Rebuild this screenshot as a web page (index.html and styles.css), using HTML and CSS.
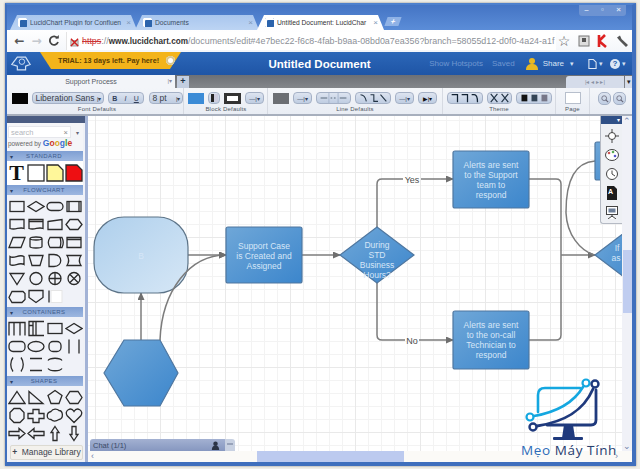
FILE: index.html
```html
<!DOCTYPE html>
<html lang="en">
<head>
<meta charset="utf-8">
<title>Untitled Document: LucidChart</title>
<link rel="stylesheet" href="styles.css">
</head>
<body>
<div class="window">
  <!-- browser tab strip -->
  <div class="tabstrip">
    <div class="tab"><span class="favicon"></span><span class="tab-title">LucidChart Plugin for Confluen</span><span class="tab-x">×</span></div>
    <div class="tab"><span class="favicon"></span><span class="tab-title">Documents</span><span class="tab-x">×</span></div>
    <div class="tab tab-active"><span class="favicon"></span><span class="tab-title">Untitled Document: LucidChar</span><span class="tab-x">×</span></div>
    <div class="tab-new">+</div>
    <div class="winctl"><span>–</span><span>▫</span><span>×</span></div>
  </div>

  <!-- address bar -->
  <div class="urlbar">
    <span class="nav nav-on">←</span><span class="nav nav-off">→</span>
    <svg class="nav-reload" viewBox="0 0 12 12"><path d="M9.5 3.2A4.2 4.2 0 1 0 10 7" fill="none" stroke="#444" stroke-width="1.8"/><path d="M7.2 3.6h3.6V0z" fill="#444"/></svg>
    <div class="omnibox">
      <svg class="lock" viewBox="0 0 10 12"><rect x="1" y="5" width="8" height="6" fill="#d8d4c8" stroke="#999"/><path d="M1 3l8 8M9 3l-8 8" stroke="#c22" stroke-width="1.6"/></svg>
      <span class="scheme">https</span><span class="url-rest">://</span><span class="host">www.lucidchart.com</span><span class="url-rest">/documents/edit#4e7bec22-f6c8-4fab-b9aa-08bd0a7ea356?branch=58055d12-d0f0-4a24-a1f</span>
    </div>
    <span class="star">☆</span>
    <svg class="ext" viewBox="0 0 14 14"><rect x="2" y="2" width="10" height="10" fill="#ddd" stroke="#777"/><rect x="5" y="4" width="4" height="4" fill="#555"/></svg>
    <svg class="ext" viewBox="0 0 14 14"><path d="M3 1v12M3 7l6-6M3 7l7 6" stroke="#d22" stroke-width="2.6" fill="none"/></svg>
    <svg class="ext" viewBox="0 0 14 14"><path d="M2 3.5l3-2 1.5 3.5 6.5 6-2 2-6.5-6.5z" fill="#555"/></svg>
  </div>

  <!-- application header -->
  <div class="appbar">
    <svg class="applogo" viewBox="0 0 24 18"><path d="M2 10L8 2h9l5 8-5 2v4H8v-4z" fill="none" stroke="#cfe0f5" stroke-width="1.3"/><circle cx="13" cy="7" r="3" fill="none" stroke="#cfe0f5"/></svg>
    <div class="trial"><span>TRIAL: 13 days left. Pay here!</span><i class="trial-x"></i></div>
    <div class="doc-title">Untitled Document</div>
    <div class="app-actions">
      <span class="dim hot">Show Hotspots</span>
      <span class="dim saved">Saved</span>
      <svg class="share-ico" viewBox="0 0 14 14"><circle cx="7" cy="4" r="3" fill="#e8b923"/><path d="M1 13c0-5 3-6 6-6s6 1 6 6z" fill="#e8b923"/></svg>
      <span class="share">Share</span><span class="caret">▾</span>
      <svg class="hdr-ico" viewBox="0 0 10 12"><path d="M1 1h5l3 3v7H1z" fill="none" stroke="#dfe8f5" stroke-width="1.2"/></svg><span class="caret">▾</span>
      <span class="help">?</span><span class="caret">▾</span>
    </div>
  </div>

  <!-- document page tabs -->
  <div class="pagetabs">
    <div class="pagetab"><span>Support Process</span><em>|▾</em></div>
    <div class="pagetab-add">+</div>
    <div class="pager"><span>|◂ ◂ ▸ ▸|</span></div>
    <div class="pager-menu">▾</div>
  </div>

  <!-- formatting toolbar -->
  <div class="toolbar">
    <div class="tgroup g-font">
      <div class="trow">
        <span class="swatch sw-black"></span>
        <span class="btn sel sel-font">Liberation Sans<b>|▾</b></span>
        <span class="btn seg-bold"><strong>B</strong><i>I</i><u>U</u></span>
        <span class="btn sel sel-size">8 pt<b>|▾</b></span>
      </div>
      <label>Font Defaults</label>
    </div>
    <div class="tgroup g-block">
      <div class="trow">
        <span class="swatch sw-blue"></span>
        <span class="btn sq"><span class="half"></span></span>
        <span class="swatch sw-border"></span>
        <span class="btn lsel">—|▾</span>
      </div>
      <label>Block Defaults</label>
    </div>
    <div class="tgroup g-line">
      <div class="trow">
        <span class="swatch sw-grey"></span>
        <span class="btn lsel">—|▾</span>
        <span class="btn seg w35"><svg viewBox="0 0 35 12"><path d="M2 6h8M14 6h2M18 6h2M25 6h8" stroke="#456" fill="none"/><path d="M12 0v12M23 0v12" stroke="#9fb0c8"/></svg></span>
        <span class="btn seg w36"><svg viewBox="0 0 36 12"><path d="M3 2c4 0 6 3 7 8M15 2h4v8h5M27 2l7 8" stroke="#234" stroke-width="1.3" fill="none"/></svg></span>
        <span class="btn lsel">—|▾</span>
        <span class="btn lsel arrowsel">▶|▾</span>
      </div>
      <label>Line Defaults</label>
    </div>
    <div class="tgroup g-theme">
      <div class="trow">
        <span class="btn seg w36"><svg viewBox="0 0 36 12"><path d="M2 2h7v9M14 2h7v9M26 2h3c3 0 4 4 4 9" stroke="#123" stroke-width="1.5" fill="none"/></svg></span>
        <span class="btn seg w25"><svg viewBox="0 0 25 12"><path d="M2 1l8 10M10 1L2 11M15 1l8 10M23 1l-8 10" stroke="#234" stroke-width="1.4"/></svg></span>
        <span class="btn seg w36"><svg viewBox="0 0 36 12"><rect x="3" y="2" width="7" height="8" fill="#111"/><rect x="15" y="2" width="7" height="8" fill="#345"/><rect x="27" y="2" width="7" height="8" fill="#778"/></svg></span>
      </div>
      <label>Theme</label>
    </div>
    <div class="tgroup g-page">
      <div class="trow"><span class="swatch sw-page"></span></div>
      <label>Page</label>
    </div>
    <div class="tzoom">
      <span class="btn zoombtn"><svg viewBox="0 0 10 10"><circle cx="4" cy="4" r="3" fill="none" stroke="#667"/><path d="M6 6l3 3" stroke="#667" stroke-width="1.4"/></svg></span>
      <span class="btn zoombtn"><svg viewBox="0 0 10 10"><circle cx="4" cy="4" r="3" fill="none" stroke="#667"/><path d="M6 6l3 3" stroke="#667" stroke-width="1.4"/></svg></span>
    </div>
  </div>

  <div class="main">
    <!-- shape library -->
    <aside class="library">
      <div class="lib-top"></div>
      <div class="lib-search">
        <div class="search-row">
          <div class="search-line"><span>search</span><em>×</em></div>
          <span class="search-caret">▾</span>
        </div>
        <div class="powered">powered by <b class="g1">G</b><b class="g2">o</b><b class="g3">o</b><b class="g1">g</b><b class="g4">l</b><b class="g2">e</b></div>
      </div>
      <div class="lib-head">▾<span>STANDARD</span></div>
      <div class="shapes standard">
        <span class="big-t">T</span>
        <svg viewBox="0 0 18 18"><rect x="1" y="1" width="16" height="16" class="s"/></svg>
        <svg viewBox="0 0 18 18"><path d="M1 1h11l5 5v11H1z" class="s note-y"/></svg>
        <svg viewBox="0 0 18 18"><path d="M1 1h11l5 5v11H1z" class="s note-r"/></svg>
      </div>
      <div class="lib-head">▾<span>FLOWCHART</span></div>
      <div class="shapes">
        <svg viewBox="0 0 18 14"><rect x="2" y="2" width="14" height="10" class="s"/></svg>
        <svg viewBox="0 0 18 14"><path d="M1 7l8-5 8 5-8 5z" class="s"/></svg>
        <svg viewBox="0 0 18 14"><rect x="1" y="3" width="16" height="8" rx="4" class="s"/></svg>
        <svg viewBox="0 0 18 14"><rect x="2" y="2" width="14" height="10" class="s"/><path d="M4 2v10M14 2v10" class="s"/></svg>
        <svg viewBox="0 0 18 14"><path d="M2 2h14v9c-5-2-8 2-14 0z" class="s"/></svg>
        <svg viewBox="0 0 18 14"><path d="M2 2h14v9c-5-2-8 2-14 0zM2 4h14" class="s"/></svg>
        <svg viewBox="0 0 18 14"><path d="M2 4l14-2v10H2z" class="s"/></svg>
        <svg viewBox="0 0 18 14"><path d="M5 2h8l4 5-4 5H5L1 7z" class="s"/></svg>
        <svg viewBox="0 0 18 14"><path d="M5 2h12l-4 10H1z" class="s"/></svg>
        <svg viewBox="0 0 18 14"><path d="M3 3c0-2 12-2 12 0v8c0 2-12 2-12 0zM3 3c0 2 12 2 12 0" class="s"/></svg>
        <svg viewBox="0 0 18 14"><path d="M4 2h12c1.500 3 1.500 7 0 10H4c-2-3-2-7 0-10zM14 2c1 3 1 7 0 10" class="s"/></svg>
        <svg viewBox="0 0 18 14"><path d="M2 2h14v10H2zM2 4h14" class="s"/></svg>
        <svg viewBox="0 0 18 14"><path d="M2 3c4 3 9-3 14 0v8c-5-3-10 3-14 0z" class="s"/></svg>
        <svg viewBox="0 0 18 14"><path d="M2 2h14l-3 10H5z" class="s"/></svg>
        <svg viewBox="0 0 18 14"><path d="M3 1h5c9 0 9 12 0 12H3z" class="s"/></svg>
        <svg viewBox="0 0 18 14"><path d="M2 2h14c-2 3-2 7 0 10H2c2-3 2-7 0-10z" class="s"/></svg>
        <svg viewBox="0 0 18 14"><path d="M2 2h14l-7 11z" class="s"/></svg>
        <svg viewBox="0 0 18 14"><circle cx="9" cy="7" r="6" class="s"/></svg>
        <svg viewBox="0 0 18 14"><circle cx="9" cy="7" r="6" class="s"/><path d="M3 7h12M9 1v12" class="s"/></svg>
        <svg viewBox="0 0 18 14"><circle cx="9" cy="7" r="6" class="s"/><path d="M5 3l8 8M13 3l-8 8" class="s"/></svg>
        <svg viewBox="0 0 18 14"><path d="M4 2h11l2 2v6l-3 3H4L1 8z" class="s"/></svg>
        <svg viewBox="0 0 18 14"><path d="M2 1h14v7l-7 5-7-5z" class="s"/></svg>
        <svg viewBox="0 0 18 14"><path d="M3 1v12" class="s"/><rect x="5" y="1" width="11" height="12" class="s-faint"/></svg>
      </div>
      <div class="lib-head">▾<span>CONTAINERS</span></div>
      <div class="shapes pad5">
        <svg viewBox="0 0 18 16"><path d="M1 15V2h16v13M6 2v13M12 2v13" class="s"/></svg>
        <svg viewBox="0 0 18 16"><path d="M17 1H2v14h15M2 5h4M6 1v14M9 1v14" class="s"/></svg>
        <svg viewBox="0 0 18 16"><rect x="2" y="3" width="14" height="10" class="s"/></svg>
        <svg viewBox="0 0 18 16"><path d="M1 8l8-5 8 5-8 5z" class="s"/></svg>
        <svg viewBox="0 0 18 16"><rect x="1" y="3" width="16" height="10" rx="4" class="s"/></svg>
        <svg viewBox="0 0 18 16"><ellipse cx="9" cy="8" rx="8" ry="5" class="s"/></svg>
        <svg viewBox="0 0 18 16"><rect x="3" y="3" width="12" height="10" rx="4" class="s"/></svg>
        <svg viewBox="0 0 18 16"><path d="M4 1v14M14 1v14" class="s"/></svg>
        <svg viewBox="0 0 18 16"><path d="M5 1C2 5 2 11 5 15M13 1c3 4 3 10 0 14" class="s"/></svg>
        <svg viewBox="0 0 18 16"><path d="M3 2h12M3 14h12" class="s"/></svg>
        <svg viewBox="0 0 18 16"><path d="M2 4c2-3 12-3 14 0M2 12c2 3 12 3 14 0" class="s"/></svg>
      </div>
      <div class="lib-head">▾<span>SHAPES</span></div>
      <div class="shapes">
        <svg viewBox="0 0 18 16"><path d="M9 2l8 12H1z" class="s"/></svg>
        <svg viewBox="0 0 18 16"><path d="M2 2l14 12H2z" class="s"/></svg>
        <svg viewBox="0 0 18 16"><path d="M9 1l7 5-3 8H5L2 6z" class="s"/></svg>
        <svg viewBox="0 0 18 16"><path d="M5 2h8l4 6-4 6H5L1 8z" class="s"/></svg>
        <svg viewBox="0 0 18 16"><path d="M6 1h6l4 4v6l-4 4H6l-4-4V5z" class="s"/></svg>
        <svg viewBox="0 0 18 16"><path d="M6 2h6v4h5v5h-5v4H6v-4H1V6h5z" class="s"/></svg>
        <svg viewBox="0 0 18 16"><path d="M5 4c2-3 6-3 8-1 4 0 5 8 0 9-3 2-6 2-8 0-5 0-5-7 0-8z" class="s"/></svg>
        <svg viewBox="0 0 18 16"><path d="M9 15L2 8C-1 3 6-1 9 4c3-5 10-1 7 4z" class="s"/></svg>
        <svg viewBox="0 0 18 16"><path d="M1 6h10V3l6 5-6 5v-3H1z" class="s"/></svg>
        <svg viewBox="0 0 18 16"><path d="M17 6H7V3L1 8l6 5v-3h10z" class="s"/></svg>
        <svg viewBox="0 0 18 16"><path d="M9 1l4 6h-2v8H7V7H5z" class="s"/></svg>
        <svg viewBox="0 0 18 16"><path d="M9 15l4-6h-2V1H7v8H5z" class="s"/></svg>
      </div>
      <button class="manage"><b>+</b> Manage Library</button>
    </aside>

    <div class="workspace">
      <div class="workspace-top">
        <!-- drawing canvas -->
        <section class="canvas">
          <svg class="diagram" viewBox="88 116 534 335">
            <defs>
              <linearGradient id="fillLight" x1="0" y1="0" x2="1" y2="1"><stop offset="0" stop-color="#aecfec"/><stop offset="1" stop-color="#d6e7f6"/></linearGradient>
              <linearGradient id="fillBlue" x1="0" y1="0" x2="1" y2="1"><stop offset="0" stop-color="#6fa7d8"/><stop offset="1" stop-color="#3c86cc"/></linearGradient>
              <marker id="head" markerWidth="8" markerHeight="7" refX="7" refY="3.500" orient="auto" markerUnits="userSpaceOnUse"><path d="M0 0l8 3.500-8 3.500z" fill="#6f6f6f"/></marker>
            </defs>

            <g class="link">
              <path d="M188 255H226" marker-end="url(#head)"/>
              <path d="M141 340V293" marker-end="url(#head)"/>
              <path d="M302 255H340" marker-end="url(#head)"/>
              <path d="M377 227V184q0-5 5-5H403M421 179H453" marker-end="url(#head)"/>
              <path d="M377 283V335q0 5 5 5H405M419 340H453" marker-end="url(#head)"/>
              <path d="M529 179H556q5 0 5 5V335q0 5-5 5H529"/>
              <path d="M561 255H595" marker-end="url(#head)"/>
              <path d="M595 161C565 163 566 205 566 213C567 235 580 250 594 255"/>
            </g>

            <rect class="node light" x="94" y="217" width="94" height="76" rx="30"/>
            <text class="nlabel" x="141" y="259">B</text>

            <path class="node" d="M124 340H160L178 373L160 406H124L104 373Z"/>

            <!-- this connector runs over the rounded block -->
            <g class="link">
              <path d="M160 340C162 290 190 255 226 255" marker-end="url(#head)"/>
            </g>

            <rect class="node" x="226" y="227" width="76" height="56" rx="2"/>
            <text class="nlabel" x="264" y="249">Support Case</text>
            <text class="nlabel" x="264" y="259">is Created and</text>
            <text class="nlabel" x="264" y="269">Assigned</text>

            <path class="node" d="M377 227L414 255L377 283L340 255Z"/>
            <text class="nlabel" x="377" y="248">During</text>
            <text class="nlabel" x="377" y="258">STD</text>
            <text class="nlabel" x="377" y="268">Business</text>
            <text class="nlabel" x="377" y="278">Hours?</text>

            <text class="elabel" x="412" y="183">Yes</text>
            <text class="elabel" x="412" y="344">No</text>

            <rect class="node" x="453" y="151" width="76" height="57" rx="2"/>
            <text class="nlabel" x="491" y="168">Alerts are sent</text>
            <text class="nlabel" x="491" y="178">to the Support</text>
            <text class="nlabel" x="491" y="188">team to</text>
            <text class="nlabel" x="491" y="198">respond</text>

            <rect class="node" x="453" y="311" width="76" height="58" rx="2"/>
            <text class="nlabel" x="491" y="328">Alerts are sent</text>
            <text class="nlabel" x="491" y="338">to the on-call</text>
            <text class="nlabel" x="491" y="348">Technician to</text>
            <text class="nlabel" x="491" y="358">respond</text>

            <rect class="node" x="595" y="142" width="40" height="38" rx="2"/>
            <path class="node" d="M595 255L640 221V289Z"/>
            <text class="nlabel" x="617" y="251">If</text>
            <text class="nlabel" x="616" y="261">as</text>
          </svg>

          <!-- floating tool palette -->
          <div class="palette">
            <div class="palette-head">▾</div>
            <svg viewBox="0 0 14 14"><circle cx="7" cy="7" r="3.500" class="p"/><path d="M7 0v4M7 10v4M0 7h4M10 7h4" class="p"/></svg>
            <svg viewBox="0 0 14 14"><ellipse cx="7" cy="7" rx="6.500" ry="5.500" class="p"/><circle cx="4" cy="5" r="1.300" fill="#c55"/><circle cx="8" cy="4" r="1.300" fill="#5a5"/><circle cx="10" cy="8" r="1.300" fill="#55c"/></svg>
            <svg viewBox="0 0 14 14"><circle cx="7" cy="7" r="5.500" class="p"/><path d="M7 3.500V7l3 2" class="p"/></svg>
            <svg viewBox="0 0 14 14"><path d="M2 0h7l3 3v11H2z" fill="#1c1c1c"/><text x="3" y="8" class="p-a">A</text></svg>
            <svg viewBox="0 0 14 14"><rect x="1.500" y="1.500" width="11" height="8" class="p"/><rect x="3.500" y="3.500" width="7" height="4" fill="#6d7f99"/><path d="M7 10v2M3 14l4-3 4 3" class="p"/></svg>
          </div>

          <div class="chat">
            <div class="chat-bar">
              <span>Chat (1/1)</span>
              <svg viewBox="0 0 10 10"><circle cx="5" cy="3" r="2.500" fill="#2b3446"/><path d="M1 10c0-4 2-5 4-5s4 1 4 5z" fill="#2b3446"/></svg>
            </div>
            <div class="chat-end"><i></i></div>
          </div>
        </section>

        <div class="vscroll"><span class="arrow">⌃</span><span class="thumb"></span><span class="arrow">⌄</span></div>
      </div>
      <div class="hscroll"><span class="arrow">‹</span><span class="hthumb"></span><span class="arrow">›</span></div>
    </div>
  </div>
</div>

<!-- site mark in the corner -->
<div class="mark">
  <svg viewBox="0 0 80 66">
    <g fill="none" stroke-linecap="round">
      <path d="M17 37V20q0-7 7-7H59" stroke="#14a7e0" stroke-width="2.600"/>
      <path d="M13 41C36 37 53 27 62 12" stroke="#14a7e0" stroke-width="2.600"/>
      <circle cx="9" cy="42" r="3.500" stroke="#14a7e0" stroke-width="2.200" fill="#fff"/>
      <circle cx="65" cy="8" r="3.500" stroke="#14a7e0" stroke-width="2.200" fill="#fff"/>
      <path d="M16 51C42 47 62 37 72 14" stroke="#1f3a7d" stroke-width="2.800"/>
      <path d="M75 15V45q0 5-5 5H26" stroke="#1f3a7d" stroke-width="2.800"/>
      <circle cx="12" cy="52" r="3.500" stroke="#1f3a7d" stroke-width="2.400" fill="#fff"/>
      <circle cx="74" cy="9" r="3.500" stroke="#1f3a7d" stroke-width="2.400" fill="#fff"/>
    </g>
    <path d="M43 50h9l2 13H41z" fill="#1f3a7d"/>
    <rect x="32" y="62" width="30" height="3" rx="1" fill="#1f3a7d"/>
  </svg>
  <span><b>Mẹo</b> Máy Tính</span>
</div>
</body>
</html>
```

FILE: styles.css
```css
* { box-sizing: border-box; }
html, body { margin: 0; height: 100%; }
body {
  position: relative;
  width: 640px;
  height: 469px;
  overflow: hidden;
  background: #efeee8;
  font-family: "Liberation Sans", Arial, sans-serif;
  padding: 3px 5px 0;
}

.window {
  width: 631px;
  height: 463px;
  border: solid #3f6fbd;
  border-width: 2px 4px 4px 2px;
  border-top-color: #4d80cd;
  box-shadow: 0 0 2px #888;
  display: flex;
  flex-direction: column;
  overflow: hidden;
  background: #fff;
}

/* browser chrome */
.tabstrip {
  height: 25px;
  flex: none;
  display: flex;
  align-items: flex-end;
  padding-left: 3px;
  background: linear-gradient(#4474c4, #5b8dd8);
  position: relative;
}
.tab {
  width: 124px;
  height: 15px;
  flex: none;
  margin-right: -2px;
  padding: 0 6px 0 8px;
  display: flex;
  align-items: center;
  gap: 3px;
  font-size: 6.700px;
  color: #3d4d63;
  background: linear-gradient(#a9c6ee, #bcd4f3);
  clip-path: polygon(0 100%, 7px 0, calc(100% - 6px) 0, 100% 100%);
}
.tab:first-child { width: 127px; }
.tab-active { background: #fff; color: #333; width: 127px; }
.favicon {
  width: 9px;
  height: 9px;
  flex: none;
  border-radius: 1px;
  background: #2c64ac;
  box-shadow: inset 2px 2px 0 #fff, inset -2px 0 0 #2c64ac;
}
.tab-title { flex: 1; white-space: nowrap; overflow: hidden; }
.tab-x { color: #8097b7; font-size: 8px; }
.tab-new {
  width: 14px;
  height: 9px;
  margin: 0 0 4px 4px;
  text-align: center;
  font: bold 8px/9px "Liberation Sans", sans-serif;
  color: #fff;
  background: #8fb2e6;
  transform: skewX(-20deg);
}
.winctl {
  position: absolute;
  top: 0;
  right: 6px;
  display: flex;
  gap: 1px;
  height: 11px;
  background: #6d93d2;
  border-radius: 0 0 3px 3px;
}
.winctl span {
  width: 15px;
  font: bold 8px/10px "Liberation Sans", sans-serif;
  text-align: center;
  color: #d8e4f6;
}

.urlbar {
  height: 22px;
  flex: none;
  display: flex;
  align-items: center;
  padding: 0 3px 0 4px;
  background: linear-gradient(#fff, #f4f6fa);
}
.nav { width: 17px; text-align: center; font: bold 12px/1 "DejaVu Sans", sans-serif; }
.nav-on { color: #555; }
.nav-off { color: #c4c8ce; }
.nav-reload { width: 12px; height: 12px; margin: 0 4px 0 3px; }
.omnibox {
  flex: 1;
  min-width: 0;
  height: 18px;
  margin-left: 2px;
  padding-left: 3px;
  display: flex;
  align-items: center;
  overflow: hidden;
  white-space: nowrap;
  font-size: 8.900px;
  color: #8c9097;
  background: #fff;
  border-left: 1px solid #e4e4e4;
}
.lock { width: 9px; height: 11px; margin-right: 3px; flex: none; }
.scheme { color: #c33; text-decoration: line-through; }
.host { color: #333; font-weight: bold; font-size: 8.200px; }
.star { width: 16px; font: 14px/1 "DejaVu Sans", sans-serif; color: #555; text-align: center; flex: none; }
.ext { width: 14px; height: 14px; margin-left: 5px; flex: none; }

/* application header */
.appbar {
  height: 23px;
  flex: none;
  position: relative;
  display: flex;
  align-items: center;
  padding-left: 3px;
  background: linear-gradient(#2c67b8, #1f55a6);
  color: #fff;
}
.applogo { width: 22px; height: 17px; flex: none; }
.trial {
  position: absolute;
  left: 33px;
  top: 0;
  width: 141px;
  height: 17px;
  padding: 0 18px 0 18px;
  display: flex;
  align-items: center;
  white-space: nowrap;
  font-size: 7.200px;
  font-weight: bold;
  color: #5a3d05;
  background: #f3b41b;
  clip-path: polygon(0 0, 100% 0, calc(100% - 11px) 100%, 11px 100%);
}
.trial-x {
  position: absolute;
  left: 126px;
  top: 4px;
  width: 9px;
  height: 9px;
  border-radius: 50%;
  background: #fff;
  box-shadow: inset 0 0 0 2px #d8c690;
}
.doc-title {
  position: absolute;
  left: 0;
  right: 0;
  text-align: center;
  font-size: 11.500px;
  font-weight: bold;
}
.app-actions {
  margin-left: auto;
  position: relative;
  display: flex;
  align-items: center;
  padding-right: 6px;
  font-size: 8px;
}
.dim { color: #6f96cf; }
.hot { margin-right: 9px; }
.saved { margin-right: 10px; }
.share-ico { width: 14px; height: 14px; margin-right: 4px; }
.share { color: #d9e4f4; }
.caret { color: #d5e1f3; font-size: 7px; margin: 0 12px 0 6px; }
.hdr-ico { width: 9px; height: 12px; margin-left: 2px; }
.help {
  width: 10px;
  height: 10px;
  border-radius: 50%;
  background: #dce6f4;
  color: #2159aa;
  font: bold 8px/10px "Liberation Sans", sans-serif;
  text-align: center;
}
.app-actions .caret:last-child { margin: 0 0 0 2px; }
.app-actions .hdr-ico + .caret { margin: 0 7px 0 2px; }

/* page tabs */
.pagetabs {
  height: 13px;
  flex: none;
  display: flex;
  align-items: stretch;
  background: linear-gradient(#6d7076, #83868b);
}
.pagetab {
  width: 168px;
  position: relative;
  text-align: center;
  font-size: 7px;
  line-height: 13px;
  color: #555b66;
  background: #f3f5f9;
}
.pagetab em { position: absolute; right: 3px; font-style: normal; color: #889; font-size: 6px; }
.pagetab-add {
  width: 12px;
  margin: 1px 0 0 2px;
  text-align: center;
  font: bold 9px/11px "Liberation Sans", sans-serif;
  color: #234;
  background: #c3cee0;
}
.pager {
  margin: 1px 0 0 auto;
  width: 58px;
  text-align: center;
  font-size: 6px;
  line-height: 12px;
  color: #8891a3;
  background: #d5dcea;
  border-radius: 3px 0 0 0;
}
.pager-menu {
  width: 7px;
  margin: 1px 0 0 1px;
  font-size: 7px;
  line-height: 12px;
  text-align: center;
  color: #222;
  background: #d5dcea;
}

/* formatting toolbar */
.toolbar {
  height: 28px;
  flex: none;
  display: flex;
  padding-left: 4px;
  background: linear-gradient(#f3f5f9, #e9edf4);
  border-bottom: 2px solid #a7afbd;
  color: #4b5360;
}
.tgroup {
  display: flex;
  flex-direction: column;
  align-items: center;
  padding-top: 4px;
  border-right: 1px solid #d6dae2;
  flex: none;
}
.tgroup label { margin-top: 1px; font-size: 6px; line-height: 9px; color: #4f5662; letter-spacing: .2px; }
.trow { display: flex; align-items: center; gap: 4px; height: 13px; }
.g-font { width: 173px; }
.g-block { width: 84px; padding-left: 1px; }
.g-line { width: 175px; }
.g-theme { width: 113px; }
.g-page { width: 34px; }
.swatch { display: block; width: 16px; height: 11px; flex: none; }
.sw-black { background: #050505; }
.sw-blue { background: #3b8bd6; }
.sw-border { width: 17px; background: #fff; border: 3px solid #333; }
.sw-grey { background: #6b6e73; }
.sw-page { background: #fff; border: 1px solid #b7bfcc; height: 12px; }
.btn {
  display: flex;
  align-items: center;
  justify-content: center;
  height: 12px;
  flex: none;
  border: 1px solid #a5b1c6;
  border-radius: 4px;
  background: linear-gradient(#dde4f0, #bfcde2);
  color: #33405a;
  font-size: 7px;
}
.btn svg { width: 100%; height: 100%; display: block; }
.sel { justify-content: space-between; padding: 0 1px 0 3px; }
.sel b { font-weight: normal; font-size: 6px; }
.sel-font { width: 72px; font-size: 8.500px; color: #3a3f49; }
.sel-size { width: 34px; font-size: 8.500px; color: #3a3f49; margin-left: 1px; }
.seg-bold { width: 36px; justify-content: space-around; font-size: 7px; }
.sq { width: 12px; }
.half { width: 7px; height: 8px; background: linear-gradient(90deg, #222 50%, #ccd 50%); }
.lsel { width: 19px; font-size: 6px; }
.arrowsel { color: #111; }
.seg { padding: 0; }
.w25 { width: 25px; }
.w35 { width: 35px; }
.w36 { width: 36px; }
.tzoom { display: flex; gap: 2px; padding: 4px 0 0 8px; }
.zoombtn { width: 13px; height: 13px; border-radius: 5px; padding: 1.500px; }

/* main work area */
.main {
  flex: 1;
  min-height: 0;
  display: flex;
}
.library {
  width: 81px;
  flex: none;
  display: flex;
  flex-direction: column;
  background: #eff1f7;
  border-right: 3px solid #a3b3d6;
  overflow: hidden;
  padding-right: 2px;
}
.lib-top { height: 7px; margin-right: -2px; flex: none; background: #4a5c82; }
.lib-search { height: 28px; flex: none; padding: 3px 1px 0; background: #f4f5f8; }
.search-row { display: flex; align-items: center; gap: 2px; }
.search-line {
  flex: 1;
  display: flex;
  justify-content: space-between;
  height: 12px;
  font-size: 7.500px;
  line-height: 11px;
  color: #b3b6bc;
  padding: 0 2px 0 2px;
  background: #fff;
  border: 1px solid #e6e7ec;
}
.search-line em { font-style: normal; color: #888; }
.search-caret { width: 9px; font-size: 6px; text-align: center; color: #667; }
.powered { font-size: 6.400px; line-height: 11px; color: #666; white-space: nowrap; }
.powered b { font-size: 8.500px; }
.g1 { color: #3a6fd0; }
.g2 { color: #cd3a2b; }
.g3 { color: #d9a825; }
.g4 { color: #3a9a45; }
.lib-head {
  height: 10px;
  flex: none;
  display: flex;
  align-items: center;
  padding-left: 3px;
  font-size: 6px;
  color: #2d4164;
  background: linear-gradient(#7f9fd3, #9db7e0);
}
.lib-head span { flex: 1; text-align: center; color: #3f5c8d; letter-spacing: .4px; padding-right: 8px; }
.shapes {
  flex: none;
  display: grid;
  grid-template-columns: repeat(4, 19px);
  grid-auto-rows: 18px;
  padding: 2px 0;
  justify-items: center;
  align-items: center;
  background: #f0f2f8;
}
.pad5 { padding-bottom: 3px; }
.shapes svg { width: 18px; height: 17px; display: block; }
.standard { grid-auto-rows: 21px; background: #fff; padding: 1px 0 2px; }
.standard svg { height: 18px; }
.big-t { font: bold 22px/20px "Liberation Serif", serif; color: #111; }
.s { fill: none; stroke: #2b2b2b; stroke-width: 1.300; }
.s-faint { fill: #fff; stroke: #e5e5e5; }
.note-y { fill: #fff79a; }
.note-r { fill: #ee0f12; }
.manage {
  margin: auto 0 2px 3px;
  width: 73px;
  height: 15px;
  flex: none;
  padding: 0;
  font: 8.500px/13px "Liberation Sans", sans-serif;
  color: #3e4550;
  background: #f3f1ec;
  border: 1px solid #dcdad2;
  border-radius: 2px;
}
.manage b { margin-right: 2px; }

.workspace {
  flex: 1;
  min-width: 0;
  display: flex;
  flex-direction: column;
}
.workspace-top {
  flex: 1;
  min-height: 0;
  display: flex;
}

/* drawing canvas with its grid */
.canvas {
  flex: 1;
  min-width: 0;
  position: relative;
  overflow: hidden;
  background-color: #fff;
  background-image:
    linear-gradient(90deg, #e9e9e9 1px, transparent 1px),
    linear-gradient(#e9e9e9 1px, transparent 1px),
    linear-gradient(90deg, #f3f3f3 1px, transparent 1px),
    linear-gradient(#f3f3f3 1px, transparent 1px);
  background-size: 65px 65px, 65px 65px, 13px 13px, 13px 13px;
  background-position: 7px 56px, 7px 56px, 7px 4px, 7px 4px;
}
.diagram { position: absolute; left: 0; top: 0; width: 534px; height: 335px; }
.link path { fill: none; stroke: #7c7c7c; stroke-width: 1.500; }
.node { fill: url(#fillBlue); stroke: #4f77a0; stroke-width: 1.200; }
.light { fill: url(#fillLight); stroke: #5d7488; }
.nlabel {
  fill: #d6e6f7;
  font-size: 8.500px;
  text-anchor: middle;
}
.elabel {
  fill: #4d4d4d;
  font-size: 9px;
  text-anchor: middle;
}

.palette {
  position: absolute;
  right: 0;
  top: 0;
  width: 22px;
  height: 108px;
  display: flex;
  flex-direction: column;
  align-items: center;
  gap: 5px;
  background: #eef0f4;
  border: 1px solid #b5bac4;
  border-right: 0;
  border-top: 0;
  border-radius: 0 0 0 3px;
}
.palette-head {
  width: 100%;
  height: 8px;
  text-align: right;
  font-size: 6px;
  line-height: 8px;
  padding-right: 2px;
  color: #fff;
  background: #2f4f86;
}
.palette svg { width: 14px; height: 14px; display: block; }
.p { fill: #fff; stroke: #444; stroke-width: 1; }
.p-a { fill: #fff; font-size: 7px; font-weight: bold; }

.chat {
  position: absolute;
  left: 2px;
  bottom: 0;
  height: 12px;
  display: flex;
}
.chat-bar {
  width: 135px;
  display: flex;
  align-items: center;
  justify-content: space-between;
  padding: 0 5px 0 3px;
  font-size: 7.500px;
  color: #3a4866;
  background: linear-gradient(#a3b1d2, #8697c0);
  border-radius: 3px 0 0 0;
}
.chat-bar svg { width: 9px; height: 9px; }
.chat-end {
  width: 10px;
  padding: 4px 2px 0;
  background: #c8d1e2;
  border-radius: 0 3px 0 0;
}
.chat-end i { display: block; height: 2px; background: #98a3ba; }

.vscroll {
  width: 10px;
  flex: none;
  display: flex;
  flex-direction: column;
  align-items: center;
  background: #f0f1f7;
  color: #6f7fa8;
  font-size: 9px;
}
.vscroll .arrow { height: 10px; line-height: 10px; }
.thumb { width: 9px; height: 63px; margin-top: 124px; margin-bottom: auto; background: #c0cdf0; }
.hscroll {
  height: 11px;
  flex: none;
  display: flex;
  align-items: stretch;
  padding: 0 12px 0 3px;
  font-size: 9px;
  line-height: 10px;
  color: #6f7fa8;
  background: #fbfaf7;
}
.hscroll .arrow { width: 5px; }
.hscroll .arrow:last-child { margin-left: auto; }
.hthumb { width: 147px; margin-left: 161px; background: #bccaef; }

/* corner mark */
.mark {
  position: absolute;
  left: 519px;
  top: 375px;
  width: 100px;
  display: flex;
  flex-direction: column;
  align-items: center;
}
.mark svg { width: 80px; height: 66px; display: block; align-self: flex-start; margin-left: 2px; }
.mark span {
  margin-top: 1px;
  font: 13.500px/16px "Open Sans", sans-serif;
  letter-spacing: .6px;
  white-space: nowrap;
  color: #27406f;
}
.mark b { font-weight: normal; color: #2b6bb8; }
```
